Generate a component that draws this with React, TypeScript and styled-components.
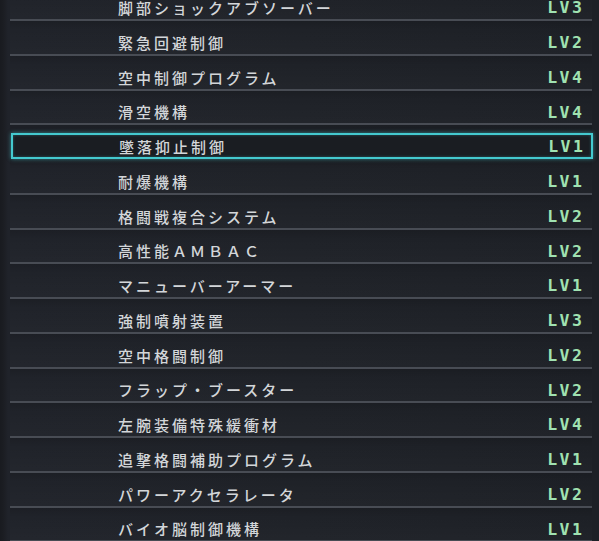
import React from "react";
import styled, { createGlobalStyle } from "styled-components";

const GlobalStyle = createGlobalStyle`
  html, body {
    margin: 0;
    padding: 0;
    background: #1e2127;
    overflow: hidden;
  }
  #root {
    width: 599px;
    height: 541px;
    overflow: hidden;
  }
`;

const Screen = styled.div`
  width: 599px;
  height: 541px;
  overflow: hidden;
  background: linear-gradient(90deg, #191b20 0px, #1b1d22 3px, #20232a 8px, #1f2228 300px, #1d2026 599px);
`;

const List = styled.ul`
  list-style: none;
  margin: -13.75px 0 0 10px;
  padding: 0;
  width: 582px;
`;

const Row = styled.li<{ $selected?: boolean }>`
  box-sizing: border-box;
  height: 34.75px;
  display: flex;
  align-items: flex-end;
  border-bottom: 2px solid ${(p) => (p.$selected ? "transparent" : "#484c54")};
  background: linear-gradient(180deg, rgba(0, 0, 0, 0.12) 0px, rgba(0, 0, 0, 0) 9px, rgba(255, 255, 255, 0.015) 100%);
`;

const Cell = styled.div<{ $selected?: boolean }>`
  box-sizing: border-box;
  flex: 1;
  height: 26px;
  margin: 0 ${(p) => (p.$selected ? "-1px" : "0")} -1px ${(p) => (p.$selected ? "1px" : "0")};
  display: flex;
  align-items: center;
  justify-content: space-between;
  padding: 0 8px 0 106px;
  border: 2px solid ${(p) => (p.$selected ? "#44c9cf" : "transparent")};
  box-shadow: ${(p) =>
    p.$selected
      ? "0 0 4px rgba(70, 205, 212, 0.55), inset 0 0 3px rgba(70, 205, 212, 0.35)"
      : "none"};
  background: ${(p) => (p.$selected ? "#1a1d22" : "transparent")};
  position: relative;
  z-index: ${(p) => (p.$selected ? 1 : 0)};
`;

const Name = styled.span`
  font-family: "Noto Sans CJK JP", "Noto Sans", sans-serif;
  font-size: 15px;
  font-weight: 500;
  line-height: 1;
  letter-spacing: 3px;
  color: #d3d6d9;
  white-space: nowrap;
  margin-top: 1px;
`;

const Level = styled.span`
  font-family: "DejaVu Sans Mono", "Liberation Mono", monospace;
  font-size: 16.5px;
  font-weight: bold;
  line-height: 1;
  letter-spacing: 2.5px;
  margin-right: -2.5px;
  color: #a0e2b1;
  white-space: nowrap;
  margin-top: 3px;
`;

type Skill = { name: string; lv: number };

const skills: Skill[] = [
  { name: "脚部ショックアブソーバー", lv: 3 },
  { name: "緊急回避制御", lv: 2 },
  { name: "空中制御プログラム", lv: 4 },
  { name: "滑空機構", lv: 4 },
  { name: "墜落抑止制御", lv: 1 },
  { name: "耐爆機構", lv: 1 },
  { name: "格闘戦複合システム", lv: 2 },
  { name: "高性能ＡＭＢＡＣ", lv: 2 },
  { name: "マニューバーアーマー", lv: 1 },
  { name: "強制噴射装置", lv: 3 },
  { name: "空中格闘制御", lv: 2 },
  { name: "フラップ・ブースター", lv: 2 },
  { name: "左腕装備特殊緩衝材", lv: 4 },
  { name: "追撃格闘補助プログラム", lv: 1 },
  { name: "パワーアクセラレータ", lv: 2 },
  { name: "バイオ脳制御機構", lv: 1 },
];

const SELECTED = 4;

export default function App() {
  return (
    <>
      <GlobalStyle />
      <Screen>
        <List>
          {skills.map((s, i) => {
            const sel = i === SELECTED;
            return (
              <Row key={s.name} $selected={sel}>
                <Cell $selected={sel}>
                  <Name>{s.name}</Name>
                  <Level>{`LV${s.lv}`}</Level>
                </Cell>
              </Row>
            );
          })}
        </List>
      </Screen>
    </>
  );
}
